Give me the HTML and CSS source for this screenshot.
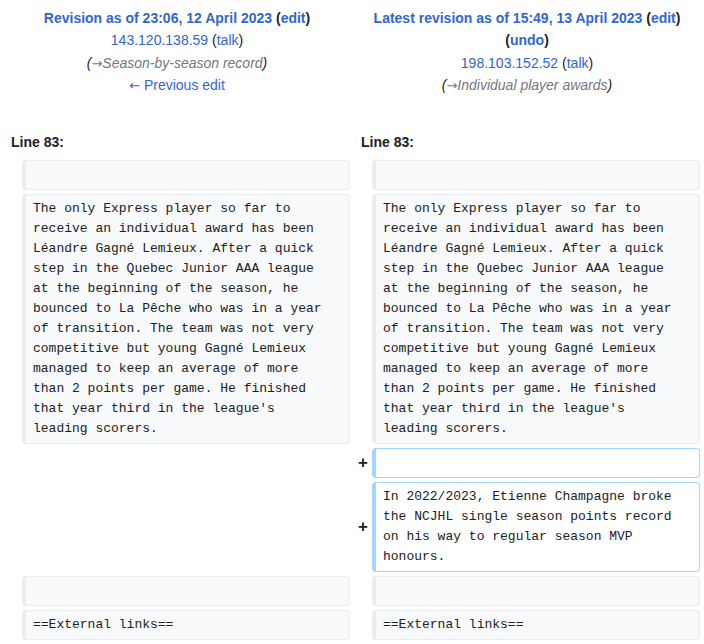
FILE: index.html
```html
<!DOCTYPE html>
<html>
<head>
<meta charset="utf-8">
<link rel="stylesheet" href="styles.css">
</head>
<body>
<table class="diff">
  <colgroup>
    <col class="col-marker"><col class="col-content"><col class="col-marker"><col class="col-content">
  </colgroup>
  <tr class="title-row">
    <td colspan="2" class="otitle">
      <div><a class="strong" href="#">Revision as of 23:06, 12 April 2023</a> <b>(<a href="#">edit</a>)</b></div>
      <div><a href="#">143.120.138.59</a> (<a href="#">talk</a>)</div>
      <div class="comment">(<span class="autocomment"><a class="arrow" href="#">→</a>Season-by-season record</span>)</div>
      <div><a href="#"><span class="arrow">←</span> Previous edit</a></div>
    </td>
    <td colspan="2" class="ntitle">
      <div><a class="strong" href="#">Latest revision as of 15:49, 13 April 2023</a> <b>(<a href="#">edit</a>)</b> <b>(<a href="#">undo</a>)</b></div>
      <div><a href="#">198.103.152.52</a> (<a href="#">talk</a>)</div>
      <div class="comment">(<span class="autocomment"><a class="arrow" href="#">→</a>Individual player awards</span>)</div>
    </td>
  </tr>
  <tr class="spacer-row"><td colspan="4"></td></tr>
  <tr>
    <td colspan="2" class="lineno">Line 83:</td>
    <td colspan="2" class="lineno">Line 83:</td>
  </tr>
  <tr>
    <td class="marker"></td><td class="context"><br></td>
    <td class="marker"></td><td class="context"><br></td>
  </tr>
  <tr>
    <td class="marker"></td><td class="context"><div>The only Express player so far to receive an individual award has been Léandre Gagné Lemieux. After a quick step in the Quebec Junior AAA league at the beginning of the season, he bounced to La Pêche who was in a year of transition. The team was not very competitive but young Gagné Lemieux managed to keep an average of more than 2 points per game. He finished that year third in the league's leading scorers.</div></td>
    <td class="marker"></td><td class="context"><div>The only Express player so far to receive an individual award has been Léandre Gagné Lemieux. After a quick step in the Quebec Junior AAA league at the beginning of the season, he bounced to La Pêche who was in a year of transition. The team was not very competitive but young Gagné Lemieux managed to keep an average of more than 2 points per game. He finished that year third in the league's leading scorers.</div></td>
  </tr>
  <tr>
    <td colspan="2" class="empty"></td>
    <td class="marker">+</td><td class="added"><br></td>
  </tr>
  <tr>
    <td colspan="2" class="empty"></td>
    <td class="marker">+</td><td class="added"><div>In 2022/2023, Etienne Champagne broke the NCJHL single season points record on his way to regular season MVP honours.</div></td>
  </tr>
  <tr>
    <td class="marker"></td><td class="context"><br></td>
    <td class="marker"></td><td class="context"><br></td>
  </tr>
  <tr>
    <td class="marker"></td><td class="context"><div>==External links==</div></td>
    <td class="marker"></td><td class="context"><div>==External links==</div></td>
  </tr>
</table>
</body>
</html>
```

FILE: styles.css
```css
html, body {
  margin: 0;
  padding: 0;
  background: #ffffff;
}
body {
  font-family: "Liberation Sans", Arial, sans-serif;
  font-size: 14px;
  color: #202122;
}
a {
  color: #3366cc;
  text-decoration: none;
}
table.diff {
  width: 704px;
  table-layout: fixed;
  border-collapse: separate;
  border-spacing: 4px;
}
.col-marker { width: 14px; }
.col-content { width: 328px; }
td {
  padding: 0;
  vertical-align: top;
}
.otitle, .ntitle {
  text-align: center;
  line-height: 22.4px;
  padding-top: 3px;
}
.strong { font-weight: bold; }
.comment {
  font-style: italic;
  color: #202122;
}
.autocomment,
.autocomment .arrow { color: #72777d; }
.arrow {
  font-family: "DejaVu Sans", sans-serif;
  font-style: normal;
  font-size: 13px;
  line-height: 14px;
}
.spacer-row td { height: 26px; }
.lineno {
  font-weight: bold;
  padding: 0 0 3px 7px;
  line-height: 22px;
}
.marker {
  text-align: right;
  vertical-align: middle;
  font-weight: bold;
  font-size: 17px;
  line-height: 20px;
  padding-right: 0;
}
.context, .added {
  font-family: "Liberation Mono", "Courier New", monospace;
  font-size: 13px;
  line-height: 20px;
  border-style: solid;
  border-width: 1px 1px 1px 4px;
  border-radius: 4px;
  padding: 4px 7px;
  white-space: pre-wrap;
  word-wrap: break-word;
}
.context {
  background: #f8f9fa;
  border-color: #eaecf0;
  color: #202122;
}
.added {
  background: #ffffff;
  border-color: #a3d3ff;
}
.context div, .added div {
  padding-right: 14px;
}
```
